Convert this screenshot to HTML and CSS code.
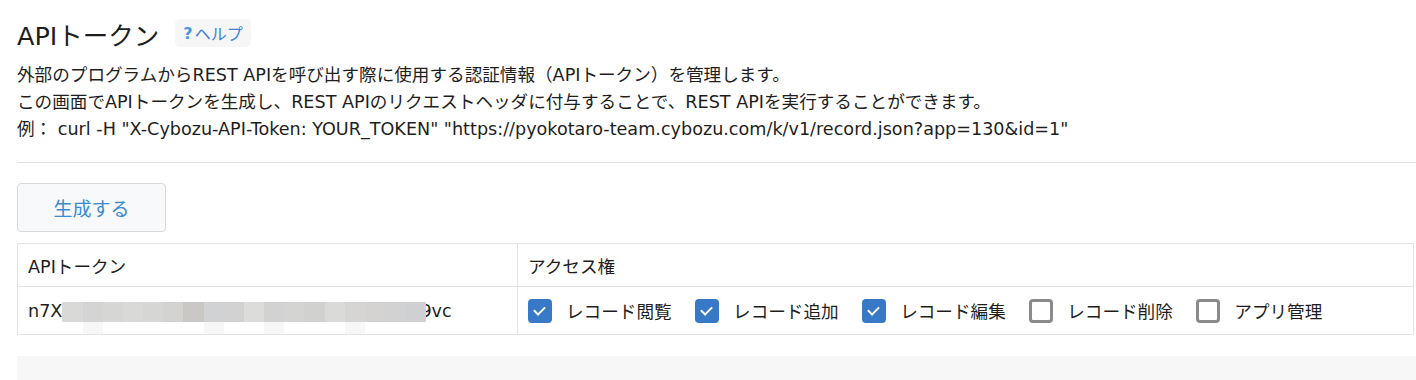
FILE: index.html
```html
<!DOCTYPE html>
<html lang="ja">
<head>
    <meta charset="UTF-8">
    <title>APIトークン</title>
    <link rel="stylesheet" href="styles.css">
</head>
<body>
    <div class="page">
        <div class="title-row">
            <h1>APIトークン</h1>
            <a class="help" href="#"><span class="help-mark">?</span>ヘルプ</a>
        </div>
        <div class="desc">
            <p>外部のプログラムからREST APIを呼び出す際に使用する認証情報（APIトークン）を管理します。</p>
            <p>この画面でAPIトークンを生成し、REST APIのリクエストヘッダに付与することで、REST APIを実行することができます。</p>
            <p>例： curl -H "X-Cybozu-API-Token: YOUR_TOKEN" "https://pyokotaro-team.cybozu.com/k/v1/record.json?app=130&amp;id=1"</p>
        </div>
        <hr class="divider">

        <button type="button" class="btn">生成する</button>

        <table class="tokens">
            <thead>
                <tr>
                    <th class="col-token">APIトークン</th>
                    <th>アクセス権</th>
                </tr>
            </thead>
            <tbody>
                <tr>
                    <td class="col-token">
                        <span class="token">n7X<span class="blur" id="blur"></span>9vc</span>
                    </td>
                    <td>
                        <div class="perms">
                            <label class="perm"><span class="check on"></span>レコード閲覧</label>
                            <label class="perm"><span class="check on"></span>レコード追加</label>
                            <label class="perm"><span class="check on"></span>レコード編集</label>
                            <label class="perm"><span class="check"></span>レコード削除</label>
                            <label class="perm"><span class="check"></span>アプリ管理</label>
                        </div>
                    </td>
                </tr>
            </tbody>
        </table>

        <div class="footer-bar"></div>
    </div>

    <script>
        // pixelated mask over the token
        const shades = ['#d9d9d8', '#d3d4d3', '#d6d6d5', '#d9d9d7', '#d6d6d5', '#d3d3d2', '#cac8c5', '#d1d2d3', '#d2d2d2', '#dcdcda',
                        '#d2d2d2', '#d4d4d3', '#d1d1d0', '#dadad8', '#d6d5d3', '#d4d3d1', '#d2d2d2', '#cfd0d2'];
        const low = [1, 7, 10, 14];
        const blur = document.getElementById('blur');
        shades.forEach((c, i) => {
            const cell = document.createElement('span');
            cell.className = 'px' + (low.includes(i) ? ' low' : '');
            cell.style.background = c;
            blur.appendChild(cell);
        });
    </script>
</body>
</html>
```

FILE: styles.css
```css
body {
    margin: 0;
    font-family: "DejaVu Sans", "Noto Sans CJK JP", sans-serif;
    color: #333;
    background: #fff;
    overflow: hidden;
    text-spacing-trim: space-all;
}

.page {
    margin-left: 17px;
    padding-top: 14px;
}

.title-row {
    display: flex;
    align-items: center;
    gap: 16px;
    height: 38px;
}

h1 {
    margin: 0;
    font-size: 25.5px;
    font-weight: normal;
    color: #1e1e1e;
}

.help {
    display: inline-flex;
    align-items: center;
    height: 28px;
    padding: 0 8px;
    background: #f6f6f6;
    border-radius: 5px;
    color: #3c82d6;
    font-size: 16px;
    text-decoration: none;
}

.help-mark {
    font-weight: bold;
    color: #4a98dc;
    margin-right: 2px;
}

.desc {
    margin-top: 10px;
    font-size: 17.6px;
    line-height: 27px;
    color: #1e1e1e;
}

.desc p {
    margin: 0;
    white-space: nowrap;
}

.divider {
    border: none;
    border-top: 1px solid #e3e3e3;
    margin: 19px 0 20px;
}

.btn {
    display: block;
    width: 149px;
    height: 49px;
    background: #f7f9fa;
    border: 1px solid #d8d8d8;
    border-radius: 4px;
    color: #3a8ad6;
    font-family: inherit;
    font-size: 19px;
    cursor: pointer;
}

.tokens {
    margin-top: 11px;
    width: 1397px;
    border-collapse: collapse;
    font-size: 17.6px;
    color: #1e1e1e;
}

.tokens th,
.tokens td {
    border: 1px solid #e3e3e3;
    text-align: left;
    font-weight: normal;
    padding: 0 10px;
}

.tokens th {
    height: 42px;
}

.tokens td {
    height: 47px;
}

.col-token {
    width: 479px;
}

.token {
    display: inline-flex;
    align-items: center;
    position: relative;
}

.blur {
    display: inline-flex;
    width: 363px;
    height: 20px;
    margin-right: -5px;
    position: relative;
    z-index: 1;
    top: 1px;
}

.px {
    flex: 1;
    height: 20px;
    position: relative;
}

.px.low::after {
    content: "";
    position: absolute;
    left: 0;
    right: 0;
    top: 20px;
    height: 12px;
    background: #f7f7f7;
}

.perms {
    display: flex;
    align-items: center;
}

.perm {
    display: inline-flex;
    align-items: center;
    margin-right: 23.5px;
}

.check {
    width: 24px;
    height: 24px;
    box-sizing: border-box;
    border: 3px solid #8a8a8a;
    border-radius: 4px;
    margin-right: 14px;
    position: relative;
}

.check.on {
    background: #3778c7;
    border-color: #3778c7;
}

.check.on::after {
    content: "";
    position: absolute;
    left: 5px;
    top: 2px;
    width: 5px;
    height: 9px;
    border-right: 2.5px solid #fff;
    border-bottom: 2.5px solid #fff;
    transform: rotate(45deg);
}

.footer-bar {
    margin-top: 21px;
    height: 40px;
    background: #f7f7f7;
}
```
